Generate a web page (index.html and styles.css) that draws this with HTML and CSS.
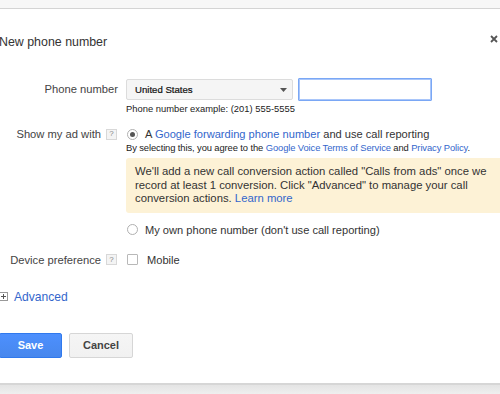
FILE: index.html
```html
<!DOCTYPE html>
<html>
<head>
<meta charset="utf-8">
<link rel="stylesheet" href="styles.css">
</head>
<body>
<div class="topstrip"></div>
<div class="dialog">
  <div class="head">
    <h1 class="title">New phone number</h1>
    <span class="close">
      <svg width="8" height="8" viewBox="0 0 8 8"><path d="M1 1L7 7M7 1L1 7" stroke="#555" stroke-width="1.8"/></svg>
    </span>
  </div>

  <div class="row row-phone">
    <div class="label">Phone number</div>
    <div class="field">
      <div class="phone-inputs">
        <div class="select">
          <span>United States</span>
          <svg class="caret" width="7" height="4" viewBox="0 0 7 4"><path d="M0 0H7L3.5 4Z" fill="#555"/></svg>
        </div>
        <div class="input"></div>
      </div>
      <div class="hint">Phone number example: (201) 555-5555</div>
    </div>
  </div>

  <div class="row row-show">
    <div class="label">Show my ad with <span class="help">?</span></div>
    <div class="field">
      <div class="option">
        <span class="radio checked"></span>
        <span>A <a class="link">Google forwarding phone number</a> and use call reporting</span>
      </div>
      <div class="terms">By selecting this, you agree to the <a class="link">Google Voice Terms of Service</a> and <a class="link">Privacy Policy</a>.</div>
      <div class="notice">We'll add a new call conversion action called "Calls from ads" once we record at least 1 conversion. Click "Advanced" to manage your call conversion actions. <a class="link">Learn more</a></div>
      <div class="option option-own">
        <span class="radio"></span>
        <span>My own phone number (don't use call reporting)</span>
      </div>
    </div>
  </div>

  <div class="row row-device">
    <div class="label">Device preference <span class="help">?</span></div>
    <div class="field">
      <div class="option">
        <span class="checkbox"></span>
        <span class="mobile">Mobile</span>
      </div>
    </div>
  </div>

  <div class="advanced">
    <span class="plus"></span>
    <a class="link">Advanced</a>
  </div>

  <div class="buttons">
    <button class="btn btn-save">Save</button>
    <button class="btn btn-cancel">Cancel</button>
  </div>
</div>
<div class="bottomstrip"></div>
</body>
</html>
```

FILE: styles.css
```css
* { box-sizing: border-box; }
html, body {
  margin: 0;
  padding: 0;
  width: 500px;
  height: 394px;
  overflow: hidden;
  background: #ffffff;
  font-family: "Liberation Sans", Arial, sans-serif;
  color: #333;
}
.topstrip {
  height: 9px;
  background: #f7f7f7;
  border-bottom: 1px solid #d4d4d4;
}
.dialog {
  height: 374px;
  background: #fff;
  padding: 0;
}
.bottomstrip {
  height: 11px;
  border-top: 2px solid #d6d6d6;
  background: linear-gradient(#e4e4e4, #efefef);
}
.head {
  display: flex;
  justify-content: space-between;
  align-items: center;
  height: 48px;
  padding-top: 20px;
}
.title {
  margin: 0;
  font-size: 12.4px;
  font-weight: normal;
  color: #333;
  margin-left: -1px;
  margin-top: -2px;
}
.close {
  display: flex;
  margin-right: 2px;
  margin-top: -8px;
}
.row {
  display: grid;
  grid-template-columns: 118px 1fr;
  column-gap: 8px;
}
.label {
  display: flex;
  justify-content: flex-end;
  align-items: center;
  gap: 5px;
  font-size: 11.2px;
  color: #444;
  height: 16px;
  white-space: nowrap;
}
.row-phone { margin-top: 21px; }
.row-phone .label { height: 21px; }
.phone-inputs {
  display: flex;
  align-items: center;
  gap: 5px;
}
.select {
  width: 167px;
  height: 21px;
  background: #f5f5f5;
  border: 1px solid #dcdcdc;
  border-radius: 2px;
  display: flex;
  align-items: center;
  justify-content: space-between;
  padding: 0 5px 0 8px;
  font-size: 9.6px;
  color: #111;
  -webkit-text-stroke: 0.2px #111;
}
.caret { display: block; }
.input {
  width: 134px;
  height: 23px;
  border: 1px solid #7aa7f5;
  box-shadow: inset 0 0 0 1px #a9c6fa;
  border-radius: 1px;
  background: #fff;
}
.hint {
  font-size: 9.4px;
  color: #222;
  margin-top: 1px;
  line-height: 13px;
}
.row-show { margin-top: 11px; }
.option {
  display: flex;
  align-items: center;
  gap: 7px;
  font-size: 11.1px;
  color: #333;
  height: 16px;
  padding-left: 1px;
}
.link { color: #3366cc; text-decoration: none; }
.radio {
  width: 11px;
  height: 11px;
  border: 1px solid #b0b0b0;
  border-radius: 50%;
  background: #fff;
  position: relative;
  flex: none;
}
.radio.checked::after {
  content: "";
  position: absolute;
  left: 2px;
  top: 2px;
  width: 5px;
  height: 5px;
  border-radius: 50%;
  background: #555;
}
.help {
  display: inline-flex;
  width: 11px;
  height: 11px;
  border: 1px solid #d8d8d8;
  background: #f4f4f4;
  font-size: 8px;
  color: #888;
  align-items: center;
  justify-content: center;
  line-height: 1;
  margin-right: 1px;
}
.terms {
  font-size: 9.4px;
  color: #222;
  margin-top: 0px;
  line-height: 12px;
  white-space: nowrap;
  letter-spacing: -0.1px;
}
.notice {
  margin-top: 4px;
  background: #fdf2d6;
  border-radius: 3px;
  padding: 7px 8px 7px 9px;
  font-size: 11.3px;
  line-height: 13.5px;
  color: #333;
  margin-right: -10px;
}
.option-own { margin-top: 9px; }
.row-device { margin-top: 14px; }
.checkbox {
  width: 11px;
  height: 11px;
  border: 1px solid #b8b8b8;
  border-radius: 1px;
  background: #fff;
  flex: none;
}
.mobile { margin-left: 2px; }
.advanced {
  display: flex;
  align-items: center;
  gap: 6px;
  margin-top: 21px;
  font-size: 12.1px;
  height: 16px;
}
.plus {
  width: 9px;
  height: 9px;
  border: 1px solid #999;
  position: relative;
  background: #fff;
  margin-left: -1px;
}
.plus::before, .plus::after {
  content: "";
  position: absolute;
  background: #555;
}
.plus::before { left: 1px; top: 3px; width: 5px; height: 1px; }
.plus::after { left: 3px; top: 1px; width: 1px; height: 5px; }
.buttons {
  display: flex;
  gap: 7px;
  margin-top: 28px;
}
.btn {
  height: 25px;
  font-family: "Liberation Sans", Arial, sans-serif;
  font-size: 11px;
  font-weight: bold;
  border-radius: 2px;
  padding: 0;
}
.btn-save {
  width: 63px;
  margin-left: -1px;
  background: linear-gradient(#4d90fe, #4787ed);
  border: 1px solid #3079ed;
  color: #fff;
}
.btn-cancel {
  width: 64px;
  background: linear-gradient(#f5f5f5, #f1f1f1);
  border: 1px solid #d6d6d6;
  color: #444;
}
```
